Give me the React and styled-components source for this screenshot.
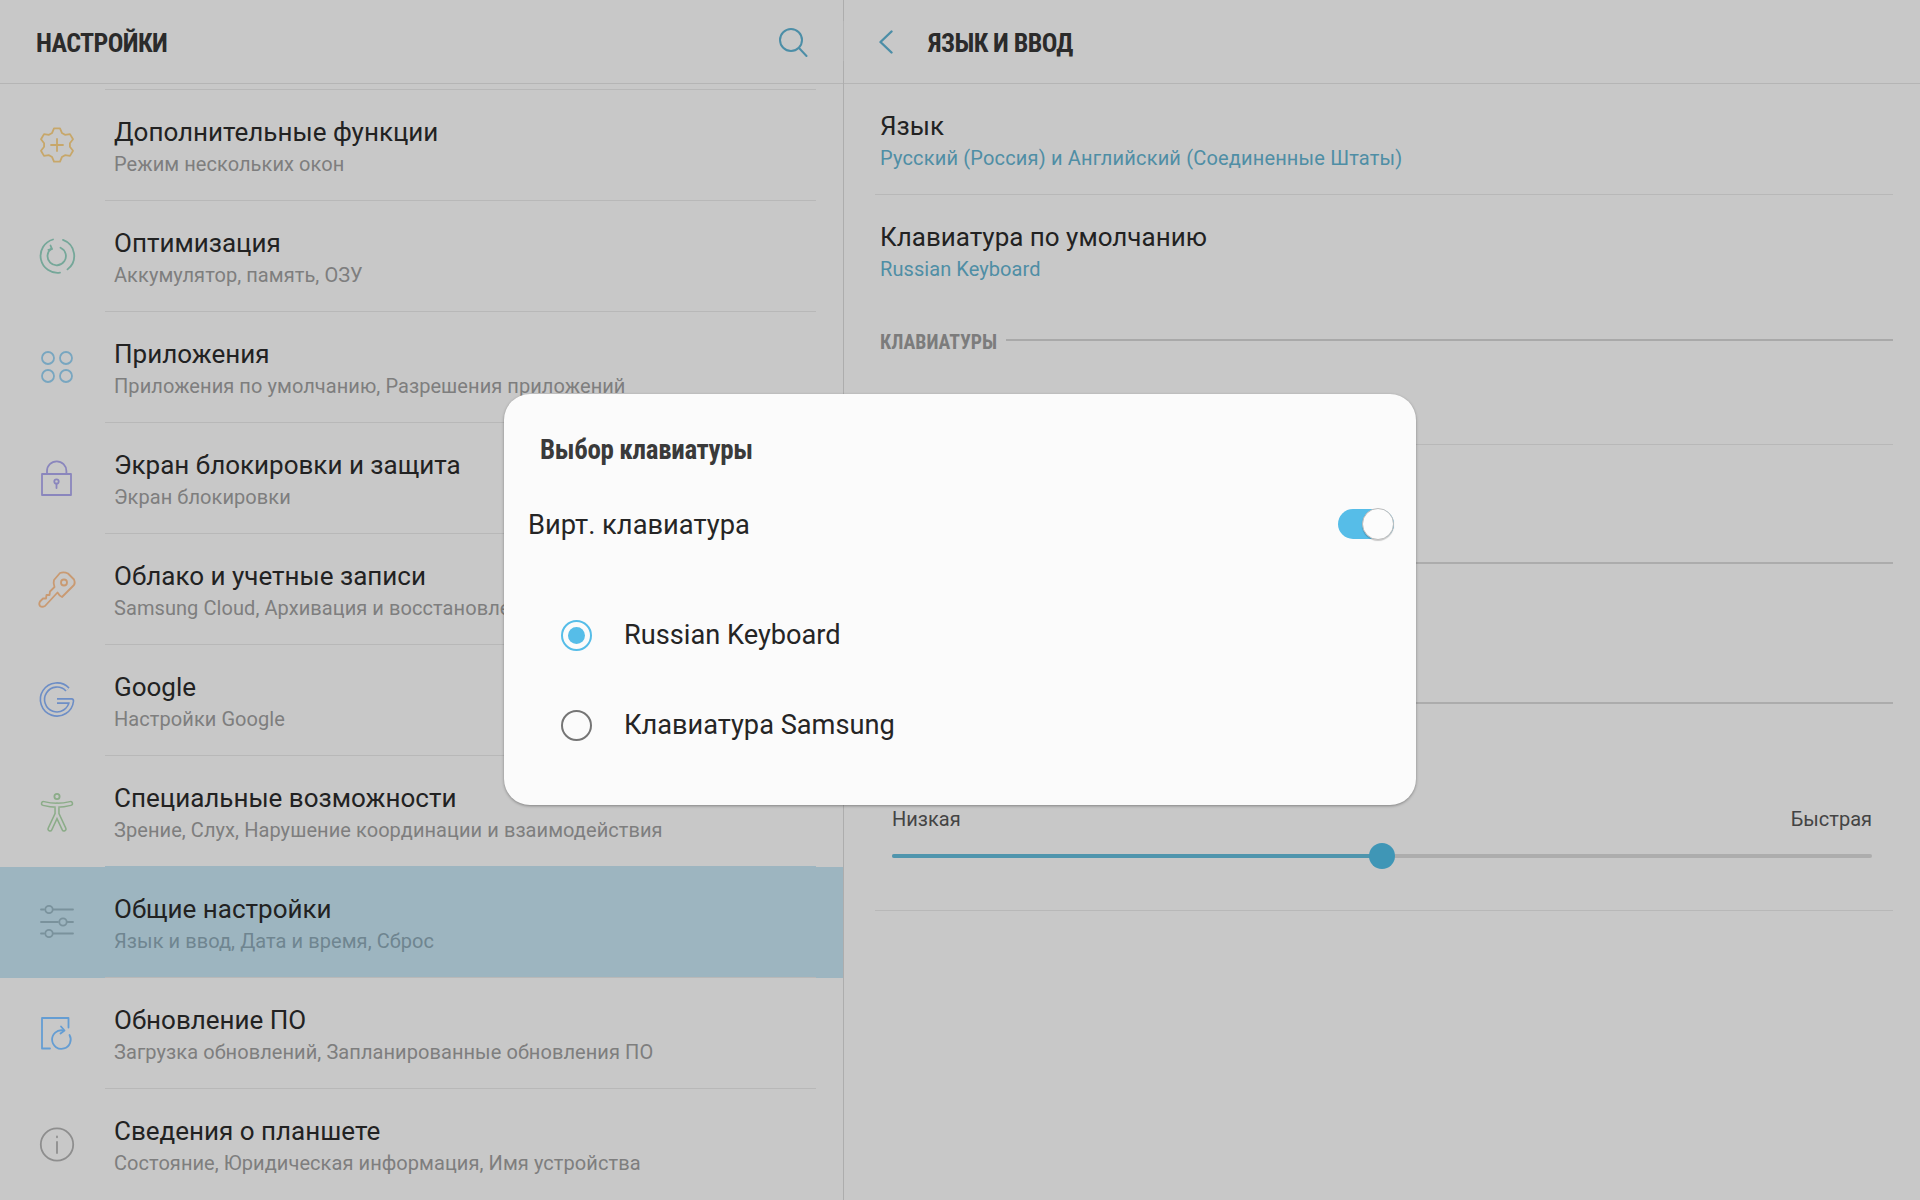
import React from "react";
import styled, { createGlobalStyle } from "styled-components";

const GlobalStyle = createGlobalStyle`
  html, body {
    margin: 0;
    padding: 0;
    background: #c8c8c8;
  }
  * {
    box-sizing: border-box;
  }
`;

const Page = styled.div`
  position: relative;
  width: 1920px;
  height: 1200px;
  overflow: hidden;
  display: flex;
  background: #c8c8c8;
  font-family: Roboto, "Noto Sans", sans-serif;
  color: #222;
`;

const LeftPanel = styled.div`
  width: 844px;
  flex: none;
  border-right: 1px solid #adadad;
`;

const RightPanel = styled.div`
  flex: 1;
  min-width: 0;
`;

const Header = styled.header`
  height: 84px;
  display: flex;
  align-items: center;
  border-bottom: 1px solid #b5b5b5;
  background: #c8c8c8;
  padding: ${(p) => p.$pad};
`;

const HeaderTitle = styled.h1`
  margin: 0;
  padding-top: 2px;
  font-size: 26px;
  font-weight: 700;
  font-stretch: condensed;
  letter-spacing: -0.6px;
  color: #2b2b2b;
  flex: ${(p) => (p.$grow ? 1 : "none")};
`;

const HeaderRule = styled.span`
  width: 1px;
  height: 40px;
  background: #b5b5b5;
  position: absolute;
  left: 843px;
  top: 21px;
`;

const List = styled.div`
  padding-top: 6px;
`;

const Row = styled.div`
  position: relative;
  height: 111px;
  display: flex;
  align-items: center;
  padding-left: 33px;
  background: ${(p) => (p.$active ? "#9db5c0" : "transparent")};
  &::before {
    content: "";
    position: absolute;
    left: 105px;
    right: 27px;
    top: -1px;
    height: 1px;
    background: ${(p) => (p.$active ? "#9db5c0" : "#b8b8b8")};
  }
`;

const IconBox = styled.svg`
  width: 48px;
  height: 48px;
  flex: none;
  fill: none;
  margin-bottom: 2px;
  stroke-width: 1.8;
  stroke-linecap: round;
  stroke-linejoin: round;
`;

const RowText = styled.div`
  margin-left: 33px;
  padding-top: 2px;
  min-width: 0;
  white-space: nowrap;
`;

const Title = styled.div`
  font-size: 26px;
  line-height: 32px;
  color: #222;
`;

const Sub = styled.div`
  font-size: 20px;
  line-height: 26px;
  margin-top: 3px;
  letter-spacing: ${(p) => (p.$wide ? "0.17px" : "0.07px")};
  color: ${(p) => p.$color || "#7e7e7e"};
`;

const SettingRow = styled.div`
  height: 111px;
  margin: 0 27px 0 31px;
  padding: 26px 5px 0;
  border-bottom: ${(p) => (p.$plain ? "none" : "1px solid #b8b8b8")};
  white-space: nowrap;
`;

const SectionHead = styled.div`
  display: flex;
  align-items: center;
  gap: 9px;
  height: 68px;
  margin: 0 27px 0 36px;
  padding-top: 4px;
  font-size: 19.8px;
  font-weight: 700;
  font-stretch: condensed;
  color: #7c7c7c;
  &::after {
    content: "";
    flex: 1;
    height: 2px;
    margin-top: -4px;
    background: #a9a9a9;
  }
`;

const CoveredRow = styled.div`
  margin: 0 27px 0 31px;
  height: ${(p) => p.$h}px;
  border-bottom: ${(p) => (p.$strong ? "2px solid #acacac" : "1px solid #b8b8b8")};
`;

const SpeedBlock = styled.div`
  margin: 0 27px 0 31px;
  height: 207px;
  border-bottom: 1px solid #b8b8b8;
  padding: 102px 21px 0 17px;
`;

const SpeedLabels = styled.div`
  display: flex;
  justify-content: space-between;
  font-size: 20px;
  line-height: 26px;
  color: #444;
`;

const Track = styled.div`
  position: relative;
  height: 4px;
  margin-top: 22px;
  background: #adadad;
  border-radius: 2px;
`;

const TrackFill = styled.div`
  height: 100%;
  background: #4f95ad;
  border-radius: 2px;
`;

const Thumb = styled.div`
  position: absolute;
  top: -11px;
  width: 26px;
  height: 26px;
  margin-left: -13px;
  border-radius: 50%;
  background: #3f96b6;
`;

const Dialog = styled.div`
  position: absolute;
  left: 504px;
  top: 394px;
  width: 912px;
  height: 411px;
  background: #fbfbfb;
  border-radius: 26px;
  box-shadow: 0 1px 3px rgba(0, 0, 0, 0.35);
  padding: 0 22px 0 24px;
`;

const DialogTitle = styled.h2`
  margin: 0;
  padding: 40px 0 0 12px;
  font-size: 27px;
  line-height: 32px;
  font-weight: 700;
  font-stretch: condensed;
  letter-spacing: -0.35px;
  color: #3a3a3a;
`;

const ToggleRow = styled.div`
  display: flex;
  align-items: center;
  justify-content: space-between;
  margin-top: 39px;
  height: 40px;
  font-size: 27.3px;
  color: #252525;
`;

const Switch = styled.div`
  position: relative;
  width: 56px;
  height: 30px;
  border-radius: 15px;
  background: #56bde8;
  margin-top: -2px;
`;

const SwitchKnob = styled.div`
  position: absolute;
  right: 0;
  top: -1px;
  width: 32px;
  height: 32px;
  border-radius: 50%;
  background: #fcfcfc;
  border: 1px solid #bdbdbd;
  box-shadow: 0 1px 1px rgba(0, 0, 0, 0.2);
`;

const Options = styled.div`
  margin-top: 75px;
  padding-left: 33px;
  display: flex;
  flex-direction: column;
  gap: 60px;
`;

const Option = styled.div`
  display: flex;
  align-items: center;
  gap: 32px;
  height: 30px;
  font-size: 27.2px;
  color: #252525;
`;

const Radio = styled.span`
  width: 31px;
  height: 31px;
  flex: none;
  border-radius: 50%;
  display: flex;
  align-items: center;
  justify-content: center;
  border: 2px solid ${(p) => (p.$on ? "#56bde8" : "#757575")};
  &::after {
    content: "";
    width: 17px;
    height: 17px;
    border-radius: 50%;
    background: ${(p) => (p.$on ? "#56bde8" : "transparent")};
  }
`;

const gearPath = () => {
  const pts = [];
  for (let i = 0; i < 6; i++) {
    const a = -90 + i * 60;
    [
      [-22, 13],
      [-10, 17],
      [10, 17],
      [22, 13],
    ].forEach(([d, r]) => {
      const t = ((a + d) * Math.PI) / 180;
      pts.push(`${(24 + r * Math.cos(t)).toFixed(1)} ${(24 + r * Math.sin(t)).toFixed(1)}`);
    });
  }
  return `M${pts.join("L")}Z`;
};

const GearIcon = () => (
  <IconBox viewBox="0 0 48 48" stroke="#c7a76a">
    <path d={gearPath()} />
    <path d="M24 18v12M18 24h12" />
  </IconBox>
);

const OptimizeIcon = () => (
  <IconBox viewBox="0 0 48 48" stroke="#75a799">
    <path d="M30 7.9A17 17 0 0 1 34.5 37.4M27 40.7A17 17 0 0 1 20 7.5" />
    <path d="M27.5 15.7A9.2 9.2 0 1 1 18.5 16.5" />
    <path d="M17.5 13.5l1.5 3.6-3.6.8" />
  </IconBox>
);

const AppsIcon = () => (
  <IconBox viewBox="0 0 48 48" stroke="#78a6c0">
    <circle cx="15" cy="15" r="6" />
    <circle cx="33" cy="15" r="6" />
    <circle cx="15" cy="33" r="6" />
    <circle cx="33" cy="33" r="6" />
  </IconBox>
);

const LockIcon = () => (
  <IconBox viewBox="0 0 48 48" stroke="#8a86bd">
    <rect x="9" y="20" width="29" height="21" />
    <path d="M14 20v-3a9.7 9.7 0 0 1 19.4 0v3" />
    <circle cx="23.5" cy="27.5" r="2.2" />
    <path d="M23.5 29.7V34" />
  </IconBox>
);

const KeyIcon = () => (
  <IconBox viewBox="0 0 48 48" stroke="#c99a72">
    <path d="M21 15L27 8Q31 6.5 35 8.5L41 14.5Q42.5 18 41 20L29 32Q26.5 31 24.5 27.5L12 41Q9 42.5 7 41Q5.5 39 7 36.5L10 33.5L13 33.5L13.5 30L16.5 30L17 26.5L21.5 22Q20 18 21 15Z" />
    <circle cx="31" cy="17.5" r="3" />
  </IconBox>
);

const googleG = "M34.5 13.5A14.5 14.5 0 1 0 38.4 25H24";

const GoogleIcon = () => (
  <IconBox viewBox="0 0 48 48">
    <path d={googleG} stroke="#6d8ec6" strokeWidth="5.8" strokeLinecap="butt" />
    <path d={googleG} stroke="#c8c8c8" strokeWidth="2.6" strokeLinecap="butt" />
  </IconBox>
);

const figure = "M10.5 16.5Q24 20 37.5 16.5M24 18V27L17 42M24 27L31 42";

const AccessIcon = () => (
  <IconBox viewBox="0 0 48 48">
    <circle cx="24" cy="9.5" r="2.6" stroke="#8bac88" />
    <path d={figure} stroke="#8bac88" strokeWidth="5.4" />
    <path d={figure} stroke="#c8c8c8" strokeWidth="2.4" />
  </IconBox>
);

const SlidersIcon = () => (
  <IconBox viewBox="0 0 48 48" stroke="#7a929c">
    <path d="M8 11.5h3M20 11.5h20M8 24h17M34 24h6M8 35.5h3M20 35.5h20" />
    <circle cx="16" cy="11.5" r="3.7" />
    <circle cx="30" cy="24" r="3.7" />
    <circle cx="16" cy="35.5" r="3.7" />
  </IconBox>
);

const UpdateIcon = () => (
  <IconBox viewBox="0 0 48 48" stroke="#649dd3">
    <path d="M35.5 18.5V9H9v30.5h8" />
    <path d="M36.5 26A9.3 9.3 0 1 1 30 21.4" />
    <path d="M28 17.5l3.5 4-4 3" />
  </IconBox>
);

const InfoIcon = () => (
  <IconBox viewBox="0 0 48 48" stroke="#8e8e8e">
    <circle cx="24" cy="24.5" r="16.2" />
    <path d="M24 16.5v.8M24 22v11" />
  </IconBox>
);

const SearchIcon = styled.svg`
  width: 30px;
  height: 30px;
  fill: none;
  stroke: #4c8ea7;
  stroke-width: 2;
  stroke-linecap: round;
  margin-right: 35px;
`;

const BackIcon = styled.svg`
  width: 16px;
  height: 24px;
  fill: none;
  stroke: #4c8ea7;
  stroke-width: 2.4;
  stroke-linecap: round;
  stroke-linejoin: round;
  margin-right: 34px;
`;

const items = [
  { icon: GearIcon, title: "Дополнительные функции", sub: "Режим нескольких окон" },
  { icon: OptimizeIcon, title: "Оптимизация", sub: "Аккумулятор, память, ОЗУ" },
  { icon: AppsIcon, title: "Приложения", sub: "Приложения по умолчанию, Разрешения приложений" },
  { icon: LockIcon, title: "Экран блокировки и защита", sub: "Экран блокировки" },
  { icon: KeyIcon, title: "Облако и учетные записи", sub: "Samsung Cloud, Архивация и восстановление" },
  { icon: GoogleIcon, title: "Google", sub: "Настройки Google" },
  { icon: AccessIcon, title: "Специальные возможности", sub: "Зрение, Слух, Нарушение координации и взаимодействия" },
  { icon: SlidersIcon, title: "Общие настройки", sub: "Язык и ввод, Дата и время, Сброс", active: true },
  { icon: UpdateIcon, title: "Обновление ПО", sub: "Загрузка обновлений, Запланированные обновления ПО" },
  { icon: InfoIcon, title: "Сведения о планшете", sub: "Состояние, Юридическая информация, Имя устройства" },
];

export default function App() {
  return (
    <Page>
      <GlobalStyle />
      <LeftPanel>
        <Header $pad="0 0 0 36px">
          <HeaderTitle $grow>НАСТРОЙКИ</HeaderTitle>
          <SearchIcon viewBox="0 0 30 30">
            <circle cx="13" cy="13" r="11" />
            <path d="M21 21l7.5 8" />
          </SearchIcon>
        </Header>
        <List>
          {items.map((item) => {
            const Icon = item.icon;
            return (
              <Row key={item.title} $active={item.active}>
                <Icon />
                <RowText>
                  <Title>{item.title}</Title>
                  <Sub $color={item.active ? "#6f8590" : undefined}>{item.sub}</Sub>
                </RowText>
              </Row>
            );
          })}
        </List>
      </LeftPanel>
      <RightPanel>
        <Header $pad="0 0 0 34px">
          <BackIcon viewBox="0 0 16 24">
            <path d="M13.5 1.5L2.5 12l11 10.5" />
          </BackIcon>
          <HeaderTitle>ЯЗЫК И ВВОД</HeaderTitle>
        </Header>
        <SettingRow>
          <Title>Язык</Title>
          <Sub $wide $color="#4f8ea5">Русский (Россия) и Английский (Соединенные Штаты)</Sub>
        </SettingRow>
        <SettingRow $plain>
          <Title>Клавиатура по умолчанию</Title>
          <Sub $color="#4f8ea5">Russian Keyboard</Sub>
        </SettingRow>
        <SectionHead>КЛАВИАТУРЫ</SectionHead>
        <CoveredRow $h={71} />
        <CoveredRow $h={119} $strong />
        <CoveredRow $h={140} $strong />
        <SpeedBlock>
          <SpeedLabels>
            <span>Низкая</span>
            <span>Быстрая</span>
          </SpeedLabels>
          <Track>
            <TrackFill style={{ width: "50%" }} />
            <Thumb style={{ left: "50%" }} />
          </Track>
        </SpeedBlock>
      </RightPanel>
      <HeaderRule />
      <Dialog>
        <DialogTitle>Выбор клавиатуры</DialogTitle>
        <ToggleRow>
          <span>Вирт. клавиатура</span>
          <Switch>
            <SwitchKnob />
          </Switch>
        </ToggleRow>
        <Options>
          <Option>
            <Radio $on />
            Russian Keyboard
          </Option>
          <Option>
            <Radio />
            Клавиатура Samsung
          </Option>
        </Options>
      </Dialog>
    </Page>
  );
}
